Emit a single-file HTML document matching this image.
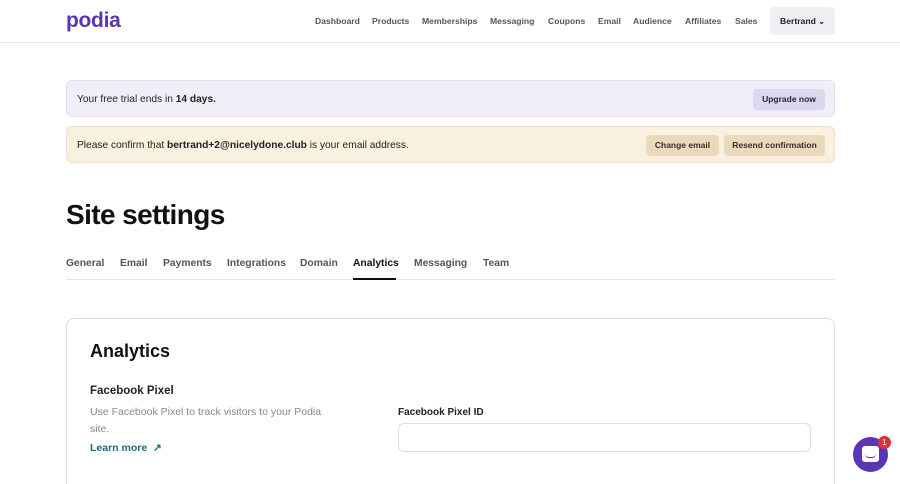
<!DOCTYPE html>
<html style="width:900px;height:484px;overflow:hidden"><head><style>
*{box-sizing:border-box;margin:0;padding:0}
body{width:900px;height:484px;overflow:hidden;background:#fff;font-family:"Liberation Sans",sans-serif;color:#222;position:relative}
.hdr{position:absolute;top:0;left:0;width:900px;height:43px;border-bottom:1px solid #e5e5e8}
.logo{position:absolute;left:66px;top:9px;font-size:21px;font-weight:bold;color:#5a35b5;letter-spacing:-0.3px}
.nav{position:absolute;top:16px;font-size:8.6px;color:#555;font-weight:bold}
.user{position:absolute;left:770px;top:7px;width:65px;height:28px;background:#eef0f3;border-radius:4px;font-size:8.6px;font-weight:bold;color:#222;line-height:28px;padding-left:10px}
.bar{position:absolute;left:66px;width:769px;height:37px;border-radius:6px;font-size:10.2px;padding-left:10px;line-height:37px}
.btn{position:absolute;top:8px;height:21px;line-height:21px;border-radius:4px;font-size:8.5px;font-weight:bold;text-align:center}
h1{position:absolute;left:66px;top:199px;font-size:28px;font-weight:bold;color:#111;letter-spacing:-0.6px}
.tab{position:absolute;top:258px;font-size:10.3px;color:#555;font-weight:bold}
.card{position:absolute;left:66px;top:318px;width:769px;height:166px;border:1px solid #ddd;border-bottom:none;border-radius:8px 8px 0 0}
</style></head><body>
<div class="hdr">
<div class="logo">podia</div>
<span class="nav" style="left:315px">Dashboard</span>
<span class="nav" style="left:372px">Products</span>
<span class="nav" style="left:422px">Memberships</span>
<span class="nav" style="left:490px">Messaging</span>
<span class="nav" style="left:548px">Coupons</span>
<span class="nav" style="left:598px">Email</span>
<span class="nav" style="left:633px">Audience</span>
<span class="nav" style="left:685px">Affiliates</span>
<span class="nav" style="left:735px">Sales</span>
<div class="user">Bertrand <span style="font-size:8px">&#8964;</span></div>
</div>
<div class="bar" style="top:80px;background:#f1eef9;border:1px solid #e3ddf1">Your free trial ends in <b>14 days.</b>
<div class="btn" style="left:686px;width:72px;background:#dcd6ee;color:#2a2340">Upgrade now</div></div>
<div class="bar" style="top:126px;background:#faf0df;border:1px solid #f0e2c8">Please confirm that <b>bertrand+2@nicelydone.club</b> is your email address.
<div class="btn" style="left:579px;width:73px;background:#ead9bd;color:#3a2e1e">Change email</div>
<div class="btn" style="left:657px;width:101px;background:#ead9bd;color:#3a2e1e">Resend confirmation</div></div>
<h1>Site settings</h1>
<span class="tab" style="left:66px">General</span>
<span class="tab" style="left:120px">Email</span>
<span class="tab" style="left:163px">Payments</span>
<span class="tab" style="left:227px">Integrations</span>
<span class="tab" style="left:300px">Domain</span>
<span class="tab" style="left:353px;color:#111">Analytics</span>
<span class="tab" style="left:414px">Messaging</span>
<span class="tab" style="left:483px">Team</span>
<div style="position:absolute;left:66px;top:279px;width:769px;height:1px;background:#e5e5e8"></div>
<div style="position:absolute;left:353px;top:278px;width:43px;height:2px;background:#111"></div>
<div class="card">
<div style="position:absolute;left:23px;top:22px;font-size:18px;font-weight:bold;color:#111">Analytics</div>
<div style="position:absolute;left:23px;top:66px;font-size:11.5px;font-weight:bold;color:#222">Facebook Pixel</div>
<div style="position:absolute;left:23px;top:85px;width:240px;font-size:10.5px;color:#888;line-height:17px">Use Facebook Pixel to track visitors to your Podia site.</div>
<div style="position:absolute;left:23px;top:123px;font-size:10.5px;font-weight:bold;color:#1e6b7a">Learn more &nbsp;↗</div>
<div style="position:absolute;left:331px;top:88px;font-size:10px;font-weight:bold;color:#222">Facebook Pixel ID</div>
<div style="position:absolute;left:331px;top:104px;width:413px;height:29px;border:1px solid #ddd;border-radius:6px"></div>
</div>
<div style="position:absolute;left:853px;top:437px;width:35px;height:35px;border-radius:50%;background:#5a35b5"></div>
<div style="position:absolute;left:862px;top:446px;width:17px;height:16px;background:#fff;border-radius:3px"></div>
<div style="position:absolute;left:865px;top:454px;width:11px;height:4px;border-bottom:1.5px solid #5a35b5;border-radius:0 0 6px 6px"></div>
<div style="position:absolute;left:878px;top:436px;width:13px;height:13px;border-radius:50%;background:#d8323c;color:#fff;font-size:8px;text-align:center;line-height:13px">1</div>
</body></html>
